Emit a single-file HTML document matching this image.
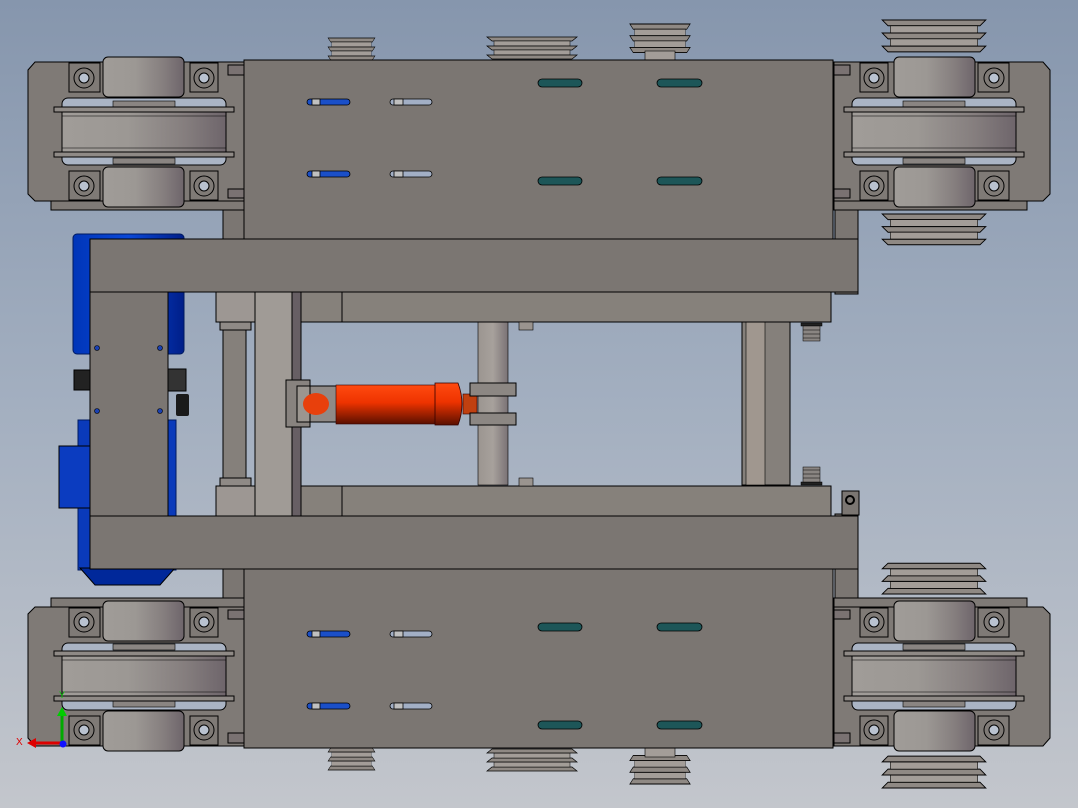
<!DOCTYPE html>
<html><head><meta charset="utf-8"><style>
html,body{margin:0;padding:0;width:1078px;height:808px;overflow:hidden}
svg{display:block}
</style></head><body>
<svg width="1078" height="808" viewBox="0 0 1078 808" xmlns="http://www.w3.org/2000/svg">
<defs>
<linearGradient id="bg" x1="0" y1="0" x2="0" y2="1">
<stop offset="0" stop-color="#8696ad"/><stop offset="0.5" stop-color="#a3afc0"/><stop offset="1" stop-color="#c3c6cc"/></linearGradient>
<linearGradient id="drum" x1="0" y1="0" x2="1" y2="0">
<stop offset="0" stop-color="#a09c98"/><stop offset="0.4" stop-color="#9c9894"/><stop offset="0.75" stop-color="#857e7e"/><stop offset="1" stop-color="#6e656b"/></linearGradient>
<linearGradient id="drumR" x1="1" y1="0" x2="0" y2="0">
<stop offset="0" stop-color="#a09c98"/><stop offset="0.4" stop-color="#9c9894"/><stop offset="0.75" stop-color="#857e7e"/><stop offset="1" stop-color="#6e656b"/></linearGradient>
<linearGradient id="blue" x1="0" y1="0" x2="1" y2="0">
<stop offset="0" stop-color="#0035b8"/><stop offset="0.5" stop-color="#0a48d8"/><stop offset="1" stop-color="#001e88"/></linearGradient>
<linearGradient id="org" x1="0" y1="0" x2="0" y2="1">
<stop offset="0" stop-color="#ff4a10"/><stop offset="0.45" stop-color="#ee3300"/><stop offset="1" stop-color="#5a1000"/></linearGradient>
<linearGradient id="col" x1="0" y1="0" x2="1" y2="0">
<stop offset="0" stop-color="#9b9590"/><stop offset="0.5" stop-color="#a7a19c"/><stop offset="1" stop-color="#7a7275"/></linearGradient>
<g id="wheelBase">
<path d="M28,70 L35,62 L244,62 L244,201 L35,201 L28,194 Z" fill="#7f7a76" stroke="#000" stroke-width="1"/>
<rect x="51" y="201" width="193" height="9" fill="#7f7a76" stroke="#000"/>
<rect x="228" y="65" width="16" height="10" fill="#7a7272" stroke="#000"/>
<rect x="228" y="189" width="16" height="9" fill="#7a7272" stroke="#000"/>
<g fill="#7f7a76" stroke="#000">
<rect x="69" y="63" width="31" height="29"/><rect x="190" y="63" width="28" height="29"/>
<rect x="69" y="171" width="31" height="29"/><rect x="190" y="171" width="28" height="29"/>
<circle cx="84" cy="78" r="10"/><circle cx="204" cy="78" r="10"/>
<circle cx="84" cy="186" r="10"/><circle cx="204" cy="186" r="10"/>
</g>
<g fill="#b9c2d0" stroke="#000">
<circle cx="84" cy="78" r="5"/><circle cx="204" cy="78" r="5"/>
<circle cx="84" cy="186" r="5"/><circle cx="204" cy="186" r="5"/>
</g>
<rect x="62" y="98" width="164" height="67" rx="6" fill="#aab4c4" stroke="#000"/>
<rect x="113" y="101" width="62" height="6" fill="#8a8582" stroke="#000" stroke-width="0.6"/>
<rect x="113" y="158" width="62" height="6" fill="#8a8582" stroke="#000" stroke-width="0.6"/>
<rect x="54" y="107" width="180" height="5" fill="#8f8a86" stroke="#000"/>
<rect x="54" y="152" width="180" height="5" fill="#8f8a86" stroke="#000"/>
</g>
<g id="wheelL">
<use href="#wheelBase"/>
<rect x="103" y="57" width="81" height="40" rx="5" fill="url(#drum)" stroke="#000"/>
<rect x="103" y="167" width="81" height="40" rx="5" fill="url(#drum)" stroke="#000"/>
<rect x="62" y="112" width="164" height="40" fill="url(#drum)" stroke="#000"/>
<line x1="62" y1="116" x2="226" y2="116" stroke="#000" stroke-width="0.6"/>
<line x1="62" y1="148" x2="226" y2="148" stroke="#000" stroke-width="0.6"/>
</g>
<g id="wheelR">
<use href="#wheelBase"/>
<rect x="103" y="57" width="81" height="40" rx="5" fill="url(#drumR)" stroke="#000"/>
<rect x="103" y="167" width="81" height="40" rx="5" fill="url(#drumR)" stroke="#000"/>
<rect x="62" y="112" width="164" height="40" fill="url(#drumR)" stroke="#000"/>
<line x1="62" y1="116" x2="226" y2="116" stroke="#000" stroke-width="0.6"/>
<line x1="62" y1="148" x2="226" y2="148" stroke="#000" stroke-width="0.6"/>
</g>
<g id="pulley">
<path d="M-45,0 L45,0 L40,4 L-40,4 Z" fill="#8f8984" stroke="#000" stroke-width="0.7"/>
<rect x="-38" y="4" width="76" height="5" fill="#a39d98" stroke="#000" stroke-width="0.5"/>
<path d="M-45,9 L45,9 L40,13 L-40,13 Z" fill="#8f8984" stroke="#000" stroke-width="0.7"/>
<rect x="-38" y="13" width="76" height="5" fill="#a39d98" stroke="#000" stroke-width="0.5"/>
<path d="M-45,18 L45,18 L40,22 L-40,22 Z" fill="#8f8984" stroke="#000" stroke-width="0.7"/>
</g>
<g id="half">
<use href="#pulley" transform="translate(351.5,38) scale(0.52,1)"/>
<use href="#pulley" transform="translate(532,37) scale(1,1)"/>
<use href="#pulley" transform="translate(660,24) scale(0.67,1.3)"/>
<rect x="645" y="51" width="30" height="9" fill="#a39d98" stroke="#000" stroke-width="0.6"/>
<use href="#pulley" transform="translate(934,20) scale(1.15,1.45)"/>
<use href="#pulley" transform="translate(934,214) scale(1.15,1.4)"/>
<rect x="223" y="210" width="21" height="30" fill="#7b7672" stroke="#000"/>
<use href="#wheelL"/>
<use href="#wheelR" transform="translate(1078,0) scale(-1,1)"/>
<rect x="835" y="210" width="23" height="84" fill="#7b7672" stroke="#000"/>
<rect x="244" y="60" width="589" height="180" fill="#7b7672" stroke="#000"/>
<g stroke="#000" stroke-width="0.8">
<rect x="307" y="99" width="43" height="6" rx="3" fill="#1a4fc8"/>
<rect x="312" y="99" width="8" height="6" fill="#c0c0c0"/>
<rect x="390" y="99" width="42" height="6" rx="3" fill="#a2afc5"/>
<rect x="394" y="99" width="9" height="6" fill="#c0c0c0"/>
<rect x="307" y="171" width="43" height="6" rx="3" fill="#1a4fc8"/>
<rect x="312" y="171" width="8" height="6" fill="#c0c0c0"/>
<rect x="390" y="171" width="42" height="6" rx="3" fill="#a2afc5"/>
<rect x="394" y="171" width="9" height="6" fill="#c0c0c0"/>
<rect x="538" y="79" width="44" height="8" rx="4" fill="#1d5658"/>
<rect x="657" y="79" width="45" height="8" rx="4" fill="#1d5658"/>
<rect x="538" y="177" width="44" height="8" rx="4" fill="#1d5658"/>
<rect x="657" y="177" width="45" height="8" rx="4" fill="#1d5658"/>
</g>
<rect x="342" y="292" width="489" height="30" fill="#86817b" stroke="#000"/>
<rect x="301" y="292" width="41" height="30" fill="#86817b" stroke="#000"/>
<rect x="216" y="292" width="39" height="30" fill="#9d9793" stroke="#000"/>
<rect x="220" y="322" width="31" height="8" fill="#8f8a86" stroke="#000"/>
<rect x="90" y="239" width="768" height="53" fill="#7b7672" stroke="#000"/>
<g stroke="#000" stroke-width="0.5">
<rect x="801" y="323" width="21" height="3" fill="#222"/>
<rect x="803" y="326" width="17" height="15" fill="#8a8582"/>
<line x1="803" y1="330" x2="820" y2="330"/><line x1="803" y1="334" x2="820" y2="334"/><line x1="803" y1="338" x2="820" y2="338"/>
</g>
<rect x="519" y="322" width="14" height="8" fill="#9a948f" stroke="#000" stroke-width="0.6"/>
</g>
</defs>
<rect width="1078" height="808" fill="url(#bg)"/>
<rect x="73" y="234" width="111" height="120" rx="4" fill="url(#blue)" stroke="#001a60"/>
<rect x="78" y="420" width="98" height="150" fill="#0a3aba" stroke="#001a60"/>
<rect x="59" y="446" width="31" height="62" fill="#0b3cc0" stroke="#000"/>
<path d="M80,568 L175,568 L160,585 L95,585 Z" fill="#00289a" stroke="#000"/>
<rect x="223" y="322" width="23" height="163" fill="#85807b" stroke="#000"/>
<rect x="478" y="322" width="30" height="163" fill="url(#col)" stroke="#000" stroke-width="0.6"/>
<rect x="742" y="322" width="48" height="163" fill="#85807b" stroke="#000"/>
<rect x="746" y="322" width="19" height="163" fill="#a0978f" stroke="#000" stroke-width="0.6"/>
<use href="#half"/>
<use href="#half" transform="translate(0,808) scale(1,-1)"/>
<rect x="255" y="292" width="37" height="224" fill="#a09b96" stroke="#000"/>
<rect x="292" y="292" width="9" height="224" fill="#675f64" stroke="#000"/>
<rect x="90" y="292" width="78" height="224" fill="#7b7672" stroke="#000"/>
<g fill="#1a40b0" stroke="#000" stroke-width="0.6">
<circle cx="97" cy="348" r="2.5"/><circle cx="160" cy="348" r="2.5"/>
<circle cx="97" cy="411" r="2.5"/><circle cx="160" cy="411" r="2.5"/>
</g>
<rect x="74" y="370" width="16" height="20" fill="#222" stroke="#000"/>
<rect x="168" y="369" width="18" height="22" fill="#333" stroke="#000"/>
<rect x="176" y="394" width="13" height="22" rx="2" fill="#1a1a1a"/>
<rect x="286" y="380" width="24" height="47" fill="#88837f" stroke="#000"/>
<rect x="297" y="386" width="13" height="36" fill="#9b9690" stroke="#000"/>
<rect x="310" y="386" width="30" height="36" fill="#8f8a87" stroke="#000"/>
<ellipse cx="316" cy="404" rx="13" ry="11" fill="#e8400c"/>
<rect x="336" y="385" width="100" height="39" fill="url(#org)" stroke="#300" stroke-width="0.6"/>
<path d="M435,383 L458,383 Q466,404 458,425 L435,425 Z" fill="url(#org)" stroke="#300" stroke-width="0.8"/>
<rect x="463" y="394" width="14" height="20" fill="#c04010" stroke="#300" stroke-width="0.6"/>
<rect x="470" y="383" width="46" height="13" fill="#8c8783" stroke="#000"/>
<rect x="470" y="413" width="46" height="12" fill="#8c8783" stroke="#000"/>
<rect x="842" y="491" width="17" height="24" fill="#7b7672" stroke="#000"/>
<circle cx="850" cy="500" r="4" fill="none" stroke="#000" stroke-width="2"/>
<line x1="62" y1="742" x2="62" y2="714" stroke="#0a0" stroke-width="3"/>
<path d="M57,716 L62,707 L67,716 Z" fill="#0c0"/>
<line x1="62" y1="743" x2="35" y2="743" stroke="#d00" stroke-width="3"/>
<path d="M36,738 L27,743 L36,748 Z" fill="#d00"/>
<circle cx="63" cy="744" r="3.5" fill="#11f"/>
<text x="16" y="745" font-family="Liberation Sans, sans-serif" font-size="10" fill="#d00">X</text>
<text x="59" y="698" font-family="Liberation Sans, sans-serif" font-size="9" fill="#0c0">Y</text>
</svg>
</body></html>
